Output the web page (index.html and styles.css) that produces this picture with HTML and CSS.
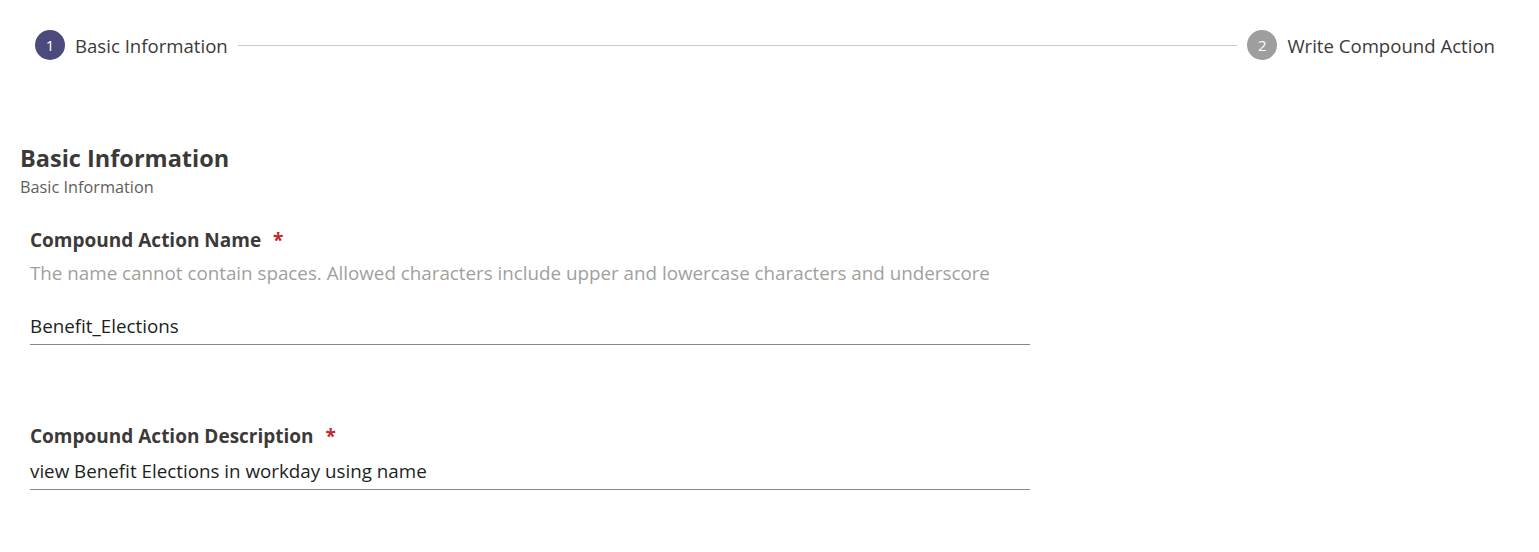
FILE: index.html
```html
<!DOCTYPE html>
<html lang="en">
<head>
<meta charset="utf-8">
<title>Compound Action</title>
<link rel="stylesheet" href="styles.css">
</head>
<body>
<div class="stepper">
  <div class="step">
    <span class="dot dot-active">1</span>
    <span class="step-label">Basic Information</span>
  </div>
  <div class="step-line"></div>
  <div class="step">
    <span class="dot dot-idle">2</span>
    <span class="step-label">Write Compound Action</span>
  </div>
</div>

<section class="section">
  <h2 class="section-title">Basic Information</h2>
  <div class="section-sub">Basic Information</div>

  <div class="field">
    <div class="field-label">Compound Action Name <span class="req">*</span></div>
    <div class="field-help">The name cannot contain spaces. Allowed characters include upper and lowercase characters and underscore</div>
    <div class="field-input field-input-name">Benefit_Elections</div>
  </div>

  <div class="field field-second">
    <div class="field-label">Compound Action Description <span class="req">*</span></div>
    <div class="field-input">view Benefit Elections in workday using name</div>
  </div>
</section>
</body>
</html>
```

FILE: styles.css
```css
html, body {
  margin: 0;
  padding: 0;
  background: #ffffff;
}

body {
  font-family: "Open Sans", "Noto Sans", sans-serif;
  color: #323130;
}

.stepper {
  display: flex;
  align-items: center;
  padding: 30px 44px 0 35px;
  height: 30px;
}

.step {
  display: flex;
  align-items: center;
  gap: 10px;
}

.dot {
  width: 30px;
  height: 30px;
  border-radius: 50%;
  color: #ffffff;
  font-size: 15px;
  display: flex;
  align-items: center;
  justify-content: center;
}

.dot-active {
  background: #4b4a7c;
}

.dot-idle {
  background: #9e9e9e;
}

.step-label {
  font-size: 18.6px;
  line-height: 26px;
  padding-top: 2px;
  color: #3b3a39;
}

.step-line {
  flex: 1;
  height: 1px;
  background: #c8c8c8;
  margin: 0 10px;
}

.section {
  padding: 0 20px;
  margin-top: 83px;
}

.section-title {
  margin: 0;
  font-size: 23.5px;
  font-weight: 700;
  line-height: 30px;
  color: #3b3a39;
}

.section-sub {
  font-size: 16.3px;
  line-height: 22px;
  margin-top: 3px;
  color: #605e5c;
}

.field {
  width: 1000px;
  padding-left: 10px;
  margin-top: 29px;
}

.field-second {
  margin-top: 78px;
}

.field-label {
  font-size: 19px;
  font-weight: 700;
  line-height: 26px;
  color: #3b3a39;
}

.req {
  color: #c4262e;
  margin-left: 7px;
}

.field-help {
  font-size: 18.8px;
  line-height: 26px;
  margin-top: 7px;
  color: #a19f9d;
}

.field-input {
  font-size: 18.8px;
  line-height: 26px;
  color: #201f1e;
  padding: 0 0 5px 0;
  border-bottom: 1px solid #8a8886;
  margin-top: 9px;
}

.field-input-name {
  margin-top: 27px;
}
```
